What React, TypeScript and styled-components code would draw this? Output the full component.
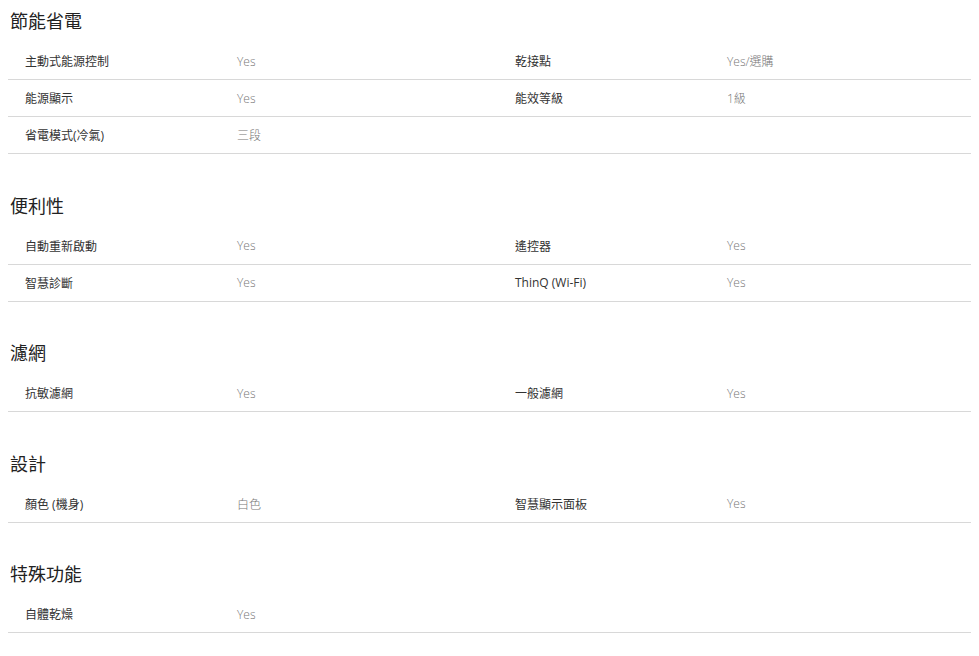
import React from 'react';
import styled, { createGlobalStyle } from 'styled-components';

type Spec = [string, string];

type Section = {
  title: string;
  rows: Spec[][];
};

const sections: Section[] = [
  {
    title: '節能省電',
    rows: [
      [['主動式能源控制', 'Yes'], ['乾接點', 'Yes/選購']],
      [['能源顯示', 'Yes'], ['能效等級', '1級']],
      [['省電模式(冷氣)', '三段']],
    ],
  },
  {
    title: '便利性',
    rows: [
      [['自動重新啟動', 'Yes'], ['遙控器', 'Yes']],
      [['智慧診斷', 'Yes'], ['ThinQ (Wi-Fi)', 'Yes']],
    ],
  },
  {
    title: '濾網',
    rows: [[['抗敏濾網', 'Yes'], ['一般濾網', 'Yes']]],
  },
  {
    title: '設計',
    rows: [[['顏色 (機身)', '白色'], ['智慧顯示面板', 'Yes']]],
  },
  {
    title: '特殊功能',
    rows: [[['自體乾燥', 'Yes']]],
  },
];

const GlobalStyle = createGlobalStyle`
  body {
    margin: 8px;
    background: #ffffff;
    font-family: "Segoe UI", "Open Sans", "Noto Sans CJK TC", sans-serif;
  }
`;

const Page = styled.div`
  display: flex;
  flex-direction: column;
  gap: 38.6px;
`;

const Block = styled.section`
  display: flex;
  flex-direction: column;
`;

const Title = styled.h3`
  margin: 0 0 11px 2px;
  font-family: "Noto Sans CJK TC", sans-serif;
  font-size: 18px;
  line-height: 24px;
  font-weight: 400;
  color: #222222;
`;

const Row = styled.div`
  display: grid;
  grid-template-columns: 212px 278px 212px 1fr;
  height: 36px;
  align-items: center;
  border-bottom: 1px solid #d8d8d8;
`;

const Label = styled.div`
  padding-left: 17px;
  font-family: "Segoe UI", "Open Sans", "Noto Sans CJK TC", sans-serif;
  font-size: 12px;
  color: #333333;
`;

const Value = styled.div`
  padding-left: 17px;
  font-family: "Open Sans", "Noto Sans CJK TC", sans-serif;
  font-size: 12px;
  font-weight: 300;
  color: #777777;
`;

export default function App() {
  return (
    <>
      <GlobalStyle />
      <Page>
        {sections.map((s) => (
          <Block key={s.title}>
            <Title>{s.title}</Title>
            {s.rows.map((row, i) => (
              <Row key={i}>
                {row.map(([label, value]) => (
                  <React.Fragment key={label}>
                    <Label>{label}</Label>
                    <Value>{value}</Value>
                  </React.Fragment>
                ))}
              </Row>
            ))}
          </Block>
        ))}
      </Page>
    </>
  );
}
